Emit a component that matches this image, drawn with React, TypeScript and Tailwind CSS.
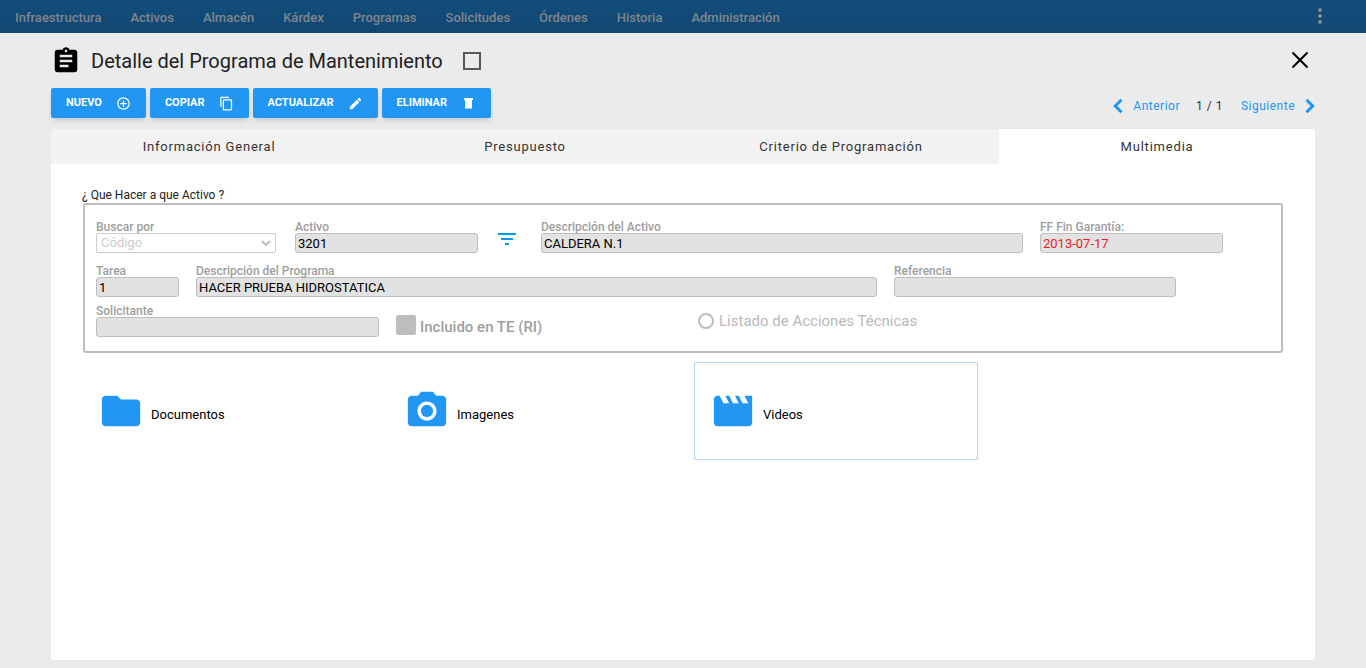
import { useState, type InputHTMLAttributes } from "react";
import type { IconType } from "react-icons";
import {
  MdAssignment,
  MdContentCopy,
  MdControlPoint,
  MdEdit,
  MdFilterList,
  MdFolder,
  MdMoreVert,
  MdMovie,
  MdPhotoCamera,
} from "react-icons/md";
import clsx from "clsx";

const NAV_ITEMS = [
  "Infraestructura",
  "Activos",
  "Almacén",
  "Kárdex",
  "Programas",
  "Solicitudes",
  "Órdenes",
  "Historia",
  "Administración",
];

const TrashIcon: IconType = ({ size }) => (
  <svg viewBox="0 0 15 15" width={size} height={size} fill="currentColor">
    <path d="M3 2h9v2h-1v8.5H4V4H3z" />
  </svg>
);

const ACTIONS: { label: string; icon: IconType }[] = [
  { label: "Nuevo", icon: MdControlPoint },
  { label: "Copiar", icon: MdContentCopy },
  { label: "Actualizar", icon: MdEdit },
  { label: "Eliminar", icon: TrashIcon },
];

const TABS = ["Información General", "Presupuesto", "Criterio de Programación", "Multimedia"];

const MEDIA: { label: string; icon: IconType }[] = [
  { label: "Documentos", icon: MdFolder },
  { label: "Imagenes", icon: MdPhotoCamera },
  { label: "Videos", icon: MdMovie },
];

interface FieldProps extends InputHTMLAttributes<HTMLInputElement> {
  id: string;
  label: string;
}

function Field({ id, label, className, ...rest }: FieldProps) {
  return (
    <div className="min-w-0">
      <label htmlFor={id} className="block text-xs leading-3 font-medium whitespace-nowrap text-[#9e9e9e]">
        {label}
      </label>
      <input
        id={id}
        readOnly
        className={clsx(
          "block h-5 w-full rounded-[3px] border border-[#bdbdbd] bg-[#e2e2e2] px-0.5 text-[13px] outline-none",
          className,
        )}
        {...rest}
      />
    </div>
  );
}

function NavBar() {
  return (
    <nav className="flex h-[33px] items-center justify-between bg-linear-to-b from-[#114e7c] to-[#134672] pt-0.5 pr-[34px] pl-[15px]">
      <div className="flex gap-[29px]">
        {NAV_ITEMS.map((item) => (
          <a key={item} href="#" className="text-[13px] font-medium text-[#7f868c]">
            {item}
          </a>
        ))}
      </div>
      <button type="button" aria-label="Más opciones" className="pb-1 text-[#86898c]">
        <MdMoreVert size={24} />
      </button>
    </nav>
  );
}

function Chevron({ d }: { d: string }) {
  return (
    <svg viewBox="0 0 10 16" width="10" height="16" fill="none" stroke="currentColor" strokeWidth="3">
      <path d={d} />
    </svg>
  );
}

function Pager() {
  return (
    <div className="flex items-center text-xs tracking-[0.5px]">
      <a href="#" className="flex items-center gap-2.5 text-[#2196f3]">
        <Chevron d="M8.5 1.8L2.3 8l6.2 6.2" />
        Anterior
      </a>
      <span className="mr-[18px] ml-4 text-[#333]">1 / 1</span>
      <a href="#" className="flex items-center gap-2.5 text-[#2196f3]">
        Siguiente
        <Chevron d="M1.5 1.8L7.7 8l-6.2 6.2" />
      </a>
    </div>
  );
}

function AssetForm() {
  return (
    <section>
      <h2 className="text-xs leading-4 text-[#222]">¿ Que Hacer a que Activo ?</h2>
      <div className="mr-px ml-px flex flex-col rounded-[3px] border-2 border-[#bdbdbd] pt-4 pr-2 pb-3.5 pl-[11px]">
        <div className="grid grid-cols-[182fr_183fr_29fr_482fr_183fr_33fr] gap-[17px]">
          <div className="pr-0.5">
            <label htmlFor="buscar" className="block text-xs leading-3 font-medium text-[#9e9e9e]">
              Buscar por
            </label>
            <div className="relative">
              <select
                id="buscar"
                disabled
                className="block h-5 w-full appearance-none rounded-xs border border-[#ccc] bg-white px-1 text-[13px] leading-[18px] text-[#ccc] opacity-100"
              >
                <option>Código</option>
              </select>
              <svg viewBox="0 0 10 6" className="pointer-events-none absolute top-[7px] right-[5px] h-1.5 w-2.5">
                <path d="M1 1l4 4 4-4" fill="none" stroke="#bdbdbd" strokeWidth="2" />
              </svg>
            </div>
          </div>
          <Field id="activo" label="Activo" defaultValue="3201" />
          <button type="button" aria-label="Filtrar" className="flex self-end pb-0.5 text-[#0d97ee]">
            <MdFilterList size={24} />
          </button>
          <Field id="descripcion" label="Descripción del Activo" defaultValue="CALDERA N.1" />
          <Field id="garantia" label="FF Fin Garantía:" defaultValue="2013-07-17" className="text-[#ee1c25]" />
        </div>
        <div className="mt-3 grid grid-cols-[83fr_681fr_282fr_80fr] gap-[17px]">
          <Field id="tarea" label="Tarea" defaultValue="1" />
          <Field id="programa" label="Descripción del Programa" defaultValue="HACER PRUEBA HIDROSTATICA" />
          <Field id="referencia" label="Referencia" />
        </div>
        <div className="mt-2 grid grid-cols-[283fr_285fr_575fr] gap-[17px]">
          <Field id="solicitante" label="Solicitante" />
          <label className="flex items-end gap-1 text-[15px] leading-5 font-medium text-[#9e9e9e]">
            <input type="checkbox" disabled className="mb-0.5 size-5 appearance-none rounded-xs bg-[#bdbdbd]" />
            Incluido en TE (RI)
          </label>
          <label className="flex items-center gap-[5px] self-center text-[15px] leading-5 text-[#b9b9b9]">
            <input type="radio" disabled className="size-4 appearance-none rounded-full border-2 border-[#bdbdbd]" />
            Listado de Acciones Técnicas
          </label>
        </div>
      </div>
    </section>
  );
}

export default function App() {
  const [tab, setTab] = useState("Multimedia");
  const [media, setMedia] = useState("Videos");

  return (
    <div className="flex min-h-screen flex-col bg-[#ebebeb] font-['Roboto',sans-serif] text-black">
      <NavBar />
      <main className="flex grow flex-col px-[51px] pt-3 pb-2">
        <header className="flex h-8 items-center">
          <MdAssignment size={30} />
          <h1 className="ml-2.5 text-xl font-normal text-[#222]">Detalle del Programa de Mantenimiento</h1>
          <input
            type="checkbox"
            aria-label="Seleccionar programa"
            className="ml-5 size-[18px] appearance-none border-2 border-[#5a5a5a]"
          />
          <button type="button" aria-label="Cerrar" className="mr-1.5 ml-auto pb-0.5">
            <svg viewBox="0 0 18 18" width="18" height="18" fill="none" stroke="currentColor" strokeWidth="2">
              <path d="M1.5 1.5l15 15M16.5 1.5l-15 15" />
            </svg>
          </button>
        </header>

        <div className="mt-[11px] flex items-start justify-between">
          <div className="flex gap-1">
            {ACTIONS.map(({ label, icon: Icon }) => (
              <button
                key={label}
                type="button"
                className="flex h-[30px] items-center gap-3.5 rounded-xs bg-[#2196f3] px-[15px] text-[11px] font-bold text-white uppercase shadow-md"
              >
                {label}
                <Icon size={15} />
              </button>
            ))}
          </div>
          <div className="pt-2.5">
            <Pager />
          </div>
        </div>

        <div role="tablist" className="mt-[11px] grid grid-cols-4 overflow-hidden rounded-t-[3px] bg-[#f2f2f2]">
          {TABS.map((name) => (
            <button
              key={name}
              type="button"
              role="tab"
              aria-selected={tab === name}
              onClick={() => setTab(name)}
              className={clsx("h-[35px] text-[13px] tracking-[0.8px] text-[#333]", tab === name && "bg-white")}
            >
              {name}
            </button>
          ))}
        </div>

        <div className="grow rounded-b-[3px] bg-white px-[31px] pt-[23px]">
          <AssetForm />
          <div className="mt-[9px] grid grid-cols-4 gap-[22px]">
            {MEDIA.map(({ label, icon: Icon }) => (
              <button
                key={label}
                type="button"
                onClick={() => setMedia(label)}
                className={clsx(
                  "flex h-[98px] items-center gap-[7px] rounded-xs border px-[15px] text-[13px]",
                  media === label ? "border-[#b0d4fa]" : "border-transparent",
                )}
              >
                <Icon size={46} className="text-[#2196f3]" />
                <span className="pt-2">{label}</span>
              </button>
            ))}
          </div>
        </div>
      </main>
    </div>
  );
}
